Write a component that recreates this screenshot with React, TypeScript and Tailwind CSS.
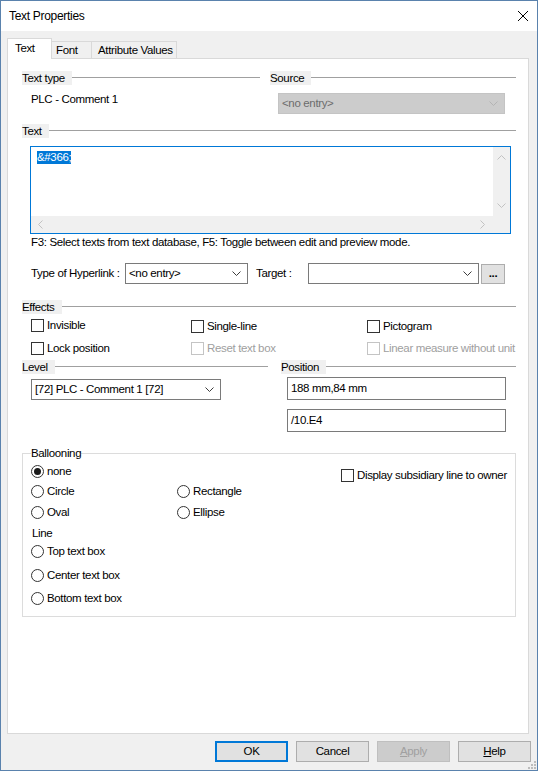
import React from 'react';

function Chevron({ color = '#3c3c3c', dir = 'down' }: { color?: string; dir?: 'down' | 'up' | 'left' | 'right' }) {
    if (dir === 'left' || dir === 'right') {
        return (
            <svg width="5" height="9" viewBox="0 0 5 9" fill="none">
                <path d={dir === 'left' ? 'M4.5 0.5 0.5 4.5 4.5 8.5' : 'M0.5 0.5 4.5 4.5 0.5 8.5'} stroke={color} />
            </svg>
        );
    }
    return (
        <svg width="9" height="5" viewBox="0 0 9 5" fill="none">
            <path d={dir === 'down' ? 'M0.5 0.5 4.5 4.5 8.5 0.5' : 'M0.5 4.5 4.5 0.5 8.5 4.5'} stroke={color} />
        </svg>
    );
}

function Heading({ label }: { label: string }) {
    return (
        <div className="flex items-center h-[15px]">
            <span className="bg-[#f0f0f0] h-[14px] leading-[14px] pr-[7px]">{label}</span>
            <div className="flex-1 h-px bg-[#a0a0a0]" />
        </div>
    );
}

function Combo({ value, className, disabled }: { value: string; className: string; disabled?: boolean }) {
    return (
        <div
            className={`flex items-center justify-between border pl-[3px] pr-[6px] ${
                disabled ? 'bg-[#cccccc] border-[#c4c4c4] text-[#6d6d6d]' : 'bg-white border-[#7a7a7a]'
            } ${className}`}
        >
            <span>{value}</span>
            <Chevron color={disabled ? '#b4b4b4' : '#3c3c3c'} />
        </div>
    );
}

function Check({ label, disabled }: { label: string; disabled?: boolean }) {
    return (
        <div className="flex items-center h-[15px]">
            <span className={`w-[13px] h-[13px] border bg-white ${disabled ? 'border-[#c4c4c4]' : 'border-[#333333]'}`} />
            <span className={`ml-[3px] ${disabled ? 'text-[#a0a0a0]' : ''}`}>{label}</span>
        </div>
    );
}

function Radio({ label, checked }: { label: string; checked?: boolean }) {
    return (
        <div className="flex items-center h-[15px]">
            <span className="w-[13px] h-[13px] rounded-full border border-[#333333] bg-white flex items-center justify-center">
                {checked && <span className="w-[7px] h-[7px] rounded-full bg-[#1a1a1a]" />}
            </span>
            <span className="ml-[3px]">{label}</span>
        </div>
    );
}

function Btn({ children, primary, disabled }: { children: React.ReactNode; primary?: boolean; disabled?: boolean }) {
    let look = 'border border-[#adadad] bg-[#e1e1e1]';
    if (primary) look = 'border-2 border-[#0078d7] bg-[#e1e1e1]';
    if (disabled) look = 'border border-[#bfbfbf] bg-[#cccccc] text-[#a0a0a0]';
    return <div className={`w-[73px] h-[21px] flex items-center justify-center ${look}`}>{children}</div>;
}

export default function App() {
    return (
        <div className="relative w-[538px] h-[771px] border border-[#5a82ad] bg-[#f0f0f0] flex flex-col font-['Liberation_Sans',Arial,sans-serif] text-[11.5px] leading-[15px] tracking-[-0.35px] text-black">
            {/* Title bar */}
            <div className="h-[30px] bg-white flex items-center justify-between pl-[8px] pr-[9px]">
                <span className="text-[12px] tracking-[-0.3px]">Text Properties</span>
                <svg width="10" height="10" viewBox="0 0 10 10">
                    <path d="M0 0 10 10 M10 0 0 10" stroke="#000" strokeWidth="1" />
                </svg>
            </div>

            {/* Tabs + panel */}
            <div className="pl-[6px] pt-[7px]">
                <div className="flex items-end">
                    <div className="relative z-10 w-[45px] h-[21px] -mb-px bg-white border border-b-0 border-[#d9d9d9] pl-[7px] pt-[2px]">
                        Text
                    </div>
                    <div className="w-[40px] h-[17px] border border-l-0 border-b-0 border-[#d9d9d9] bg-[#f0f0f0] pl-[4px] pt-px">
                        Font
                    </div>
                    <div className="w-[85px] h-[17px] border border-l-0 border-b-0 border-[#d9d9d9] bg-[#f0f0f0] pl-[6px] pt-px">
                        Attribute Values
                    </div>
                </div>

                <div className="w-[522px] h-[676px] border border-[#d9d9d9] bg-white pl-[14px] pr-[12px] flex flex-col">
                    {/* Text type / Source */}
                    <div className="flex mt-[11px]">
                        <div className="w-[238px] flex flex-col">
                            <Heading label="Text type" />
                            <div className="mt-[7px] ml-[9px] h-[15px]">PLC - Comment 1</div>
                        </div>
                        <div className="ml-[10px] flex-1 flex flex-col">
                            <Heading label="Source" />
                            <Combo value="<no entry>" disabled className="mt-[8px] ml-[8px] w-[227px] h-[21px]" />
                        </div>
                    </div>

                    {/* Text */}
                    <div className="mt-[9px]">
                        <Heading label="Text" />
                    </div>
                    <div className="mt-[8px] ml-[8px] w-[481px] h-[88px] border border-[#0078d7] bg-white flex flex-col">
                        <div className="flex flex-1">
                            <div className="flex-1 pl-[6px] pt-[3px]">
                                <span className="bg-[#0078d7] text-white leading-[13px] inline-block">&amp;#366;</span>
                            </div>
                            <div className="w-[17px] bg-[#f0f0f0] flex flex-col items-center justify-between pt-[8px] pb-[8px]">
                                <Chevron dir="up" color="#c2c2c2" />
                                <Chevron dir="down" color="#c2c2c2" />
                            </div>
                        </div>
                        <div className="h-[17px] flex">
                            <div className="flex-1 bg-[#f0f0f0] flex items-center justify-between pl-[7px] pr-[8px]">
                                <Chevron dir="left" color="#c2c2c2" />
                                <Chevron dir="right" color="#c2c2c2" />
                            </div>
                            <div className="w-[17px] bg-[#f0f0f0]" />
                        </div>
                    </div>
                    <div className="mt-[1px] ml-[9px] h-[15px]">
                        F3: Select texts from text database, F5: Toggle between edit and preview mode.
                    </div>

                    {/* Hyperlink */}
                    <div className="mt-[13px] h-[21px] flex items-center">
                        <span className="ml-[9px] w-[94px]">Type of Hyperlink :</span>
                        <Combo value="<no entry>" className="w-[123px] h-[21px]" />
                        <span className="ml-[8px] w-[52px]">Target :</span>
                        <Combo value="" className="w-[171px] h-[21px]" />
                        <div className="ml-[2px] w-[24px] h-[20px] border border-[#adadad] bg-[#e1e1e1] flex items-center justify-center font-bold leading-[10px] pb-[1px]">
                            ...
                        </div>
                    </div>

                    {/* Effects */}
                    <div className="mt-[15px]">
                        <Heading label="Effects" />
                    </div>
                    <div className="mt-[4px] ml-[9px] flex">
                        <div className="w-[160px]">
                            <Check label="Invisible" />
                        </div>
                        <div className="w-[176px] mt-px">
                            <Check label="Single-line" />
                        </div>
                        <div className="mt-px">
                            <Check label="Pictogram" />
                        </div>
                    </div>
                    <div className="mt-[7px] ml-[9px] flex">
                        <div className="w-[160px]">
                            <Check label="Lock position" />
                        </div>
                        <div className="w-[176px]">
                            <Check label="Reset text box" disabled />
                        </div>
                        <Check label="Linear measure without unit" disabled />
                    </div>

                    {/* Level / Position */}
                    <div className="mt-[3px] flex">
                        <div className="w-[246px] flex flex-col">
                            <Heading label="Level" />
                            <Combo value="[72] PLC - Comment 1 [72]" className="mt-[5px] ml-[9px] w-[190px] h-[21px]" />
                        </div>
                        <div className="ml-[13px] flex-1 flex flex-col">
                            <Heading label="Position" />
                            <div className="mt-[3px] ml-[6px] w-[219px] h-[23px] border border-[#7a7a7a] bg-white pl-[3px] flex items-center">
                                188 mm,84 mm
                            </div>
                            <div className="mt-[9px] ml-[6px] w-[219px] h-[23px] border border-[#7a7a7a] bg-white pl-[3px] flex items-center">
                                /10.E4
                            </div>
                        </div>
                    </div>

                    {/* Ballooning */}
                    <fieldset className="mt-[14px] w-[494px] border border-[#dcdcdc] pl-[8px] pb-[10px]">
                        <legend className="h-[15px]">Ballooning</legend>
                        <div className="flex">
                            <div className="w-[310px] flex flex-col">
                                <div className="mt-[3px]">
                                    <Radio label="none" checked />
                                </div>
                                <div className="mt-[5px] flex">
                                    <div className="w-[146px]">
                                        <Radio label="Circle" />
                                    </div>
                                    <Radio label="Rectangle" />
                                </div>
                                <div className="mt-[6px] flex">
                                    <div className="w-[146px]">
                                        <Radio label="Oval" />
                                    </div>
                                    <Radio label="Ellipse" />
                                </div>
                                <div className="mt-[6px] ml-[1px] h-[15px]">Line</div>
                                <div className="mt-[3px]">
                                    <Radio label="Top text box" />
                                </div>
                                <div className="mt-[9px]">
                                    <Radio label="Center text box" />
                                </div>
                                <div className="mt-[8px]">
                                    <Radio label="Bottom text box" />
                                </div>
                            </div>
                            <div className="mt-[7px]">
                                <Check label="Display subsidiary line to owner" />
                            </div>
                        </div>
                    </fieldset>
                </div>
            </div>

            {/* Buttons */}
            <div className="mt-[7px] flex justify-end gap-[8px] pr-[6px]">
                <Btn primary>OK</Btn>
                <Btn>Cancel</Btn>
                <Btn disabled>
                    <span>
                        <span className="underline">A</span>pply
                    </span>
                </Btn>
                <Btn>
                    <span>
                        <span className="underline">H</span>elp
                    </span>
                </Btn>
            </div>

            {/* resize grip */}
            <svg className="absolute right-[1px] bottom-[1px]" width="8" height="8" viewBox="0 0 8 8">
                <rect x="6" y="0" width="2" height="2" fill="#bcbcbc" />
                <rect x="3" y="3" width="2" height="2" fill="#bcbcbc" />
                <rect x="6" y="3" width="2" height="2" fill="#bcbcbc" />
                <rect x="0" y="6" width="2" height="2" fill="#bcbcbc" />
                <rect x="3" y="6" width="2" height="2" fill="#bcbcbc" />
                <rect x="6" y="6" width="2" height="2" fill="#bcbcbc" />
            </svg>
        </div>
    );
}
